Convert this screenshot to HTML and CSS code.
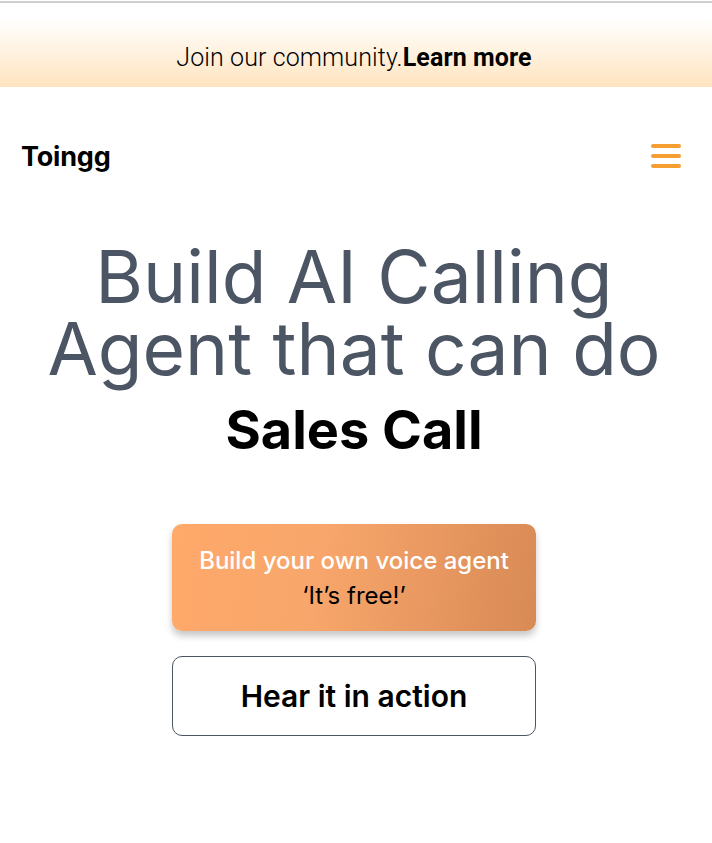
FILE: index.html
```html
<!DOCTYPE html>
<html lang="en">
<head>
<meta charset="utf-8">
<title>Toingg</title>
<link rel="stylesheet" href="styles.css">
</head>
<body>
<div class="topline"></div>
<div class="banner">
  <span class="banner-text">Join our community.<b>Learn more</b></span>
</div>
<header class="nav">
  <div class="logo">Toingg</div>
  <button class="menu" aria-label="Menu">
    <svg width="32" height="28" viewBox="0 0 32 28">
      <g stroke="#f59f33" stroke-width="4" stroke-linecap="round">
        <line x1="3" y1="4" x2="29" y2="4"/>
        <line x1="3" y1="14" x2="29" y2="14"/>
        <line x1="3" y1="24" x2="29" y2="24"/>
      </g>
    </svg>
  </button>
</header>
<main class="hero">
  <h1 class="title">Build AI Calling<br>Agent that can do</h1>
  <div class="rotator">Sales Call</div>
  <div class="actions">
    <a class="btn-primary" href="#"><span class="btn-main">Build your own voice agent</span><span class="btn-sub">‘It’s free!’</span></a>
    <a class="btn-outline" href="#">Hear it in action</a>
  </div>
</main>
</body>
</html>
```

FILE: styles.css
```css
* { box-sizing: border-box; }
html, body { margin: 0; padding: 0; background: #fff; }
body { font-family: Inter, "Noto Sans", sans-serif; color: #000; }

.topline {
  margin-top: 1px;
  height: 2px;
  background: #cfcfcf;
}

.banner {
  height: 84px;
  background: linear-gradient(to bottom, #ffffff 18%, #ffe4bf 100%);
  display: flex;
  justify-content: center;
  align-items: flex-end;
  padding: 0 4px 14px 0;
}
.banner-text {
  font-family: Roboto, "Liberation Sans", sans-serif;
  font-size: 25px;
  line-height: 30px;
  font-weight: 300;
  letter-spacing: 0.1px;
  color: #000;
}
.banner-text b { font-weight: 700; color: #000; }

.nav {
  display: flex;
  justify-content: space-between;
  align-items: center;
  padding: 0 30px 0 21px;
  height: 138px;
}
.logo {
  font-weight: 700;
  font-size: 27px;
  letter-spacing: -0.2px;
}
.menu {
  border: 0;
  background: none;
  padding: 0;
  display: flex;
}

.hero {
  display: flex;
  flex-direction: column;
  align-items: center;
  text-align: center;
  padding: 16px 4px 0 0;
}
.title {
  margin: 0;
  font-weight: 400;
  font-size: 73px;
  line-height: 72px;
  color: #4b5563;
}
.rotator {
  margin-top: 14px;
  font-weight: 700;
  font-size: 54px;
  line-height: 62px;
}

.actions {
  margin-top: 63px;
  display: flex;
  flex-direction: column;
  gap: 25px;
  width: 364px;
}
.btn-primary {
  display: flex;
  flex-direction: column;
  align-items: center;
  justify-content: center;
  height: 107px;
  border-radius: 10px;
  background: linear-gradient(100deg, #ffa96a 0%, #f8a66b 40%, #d88a55 100%);
  box-shadow: 0 5px 7px rgba(0,0,0,0.22);
  text-decoration: none;
  gap: 6px;
}
.btn-main {
  color: #fff;
  font-size: 24px;
  line-height: 29px;
  font-weight: 500;
}
.btn-sub {
  color: #000;
  font-size: 24px;
  line-height: 29px;
}
.btn-outline {
  display: flex;
  align-items: center;
  justify-content: center;
  height: 80px;
  border: 1px solid #4b5563;
  border-radius: 10px;
  color: #000;
  text-decoration: none;
  font-size: 30px;
  font-weight: 600;
}
```
